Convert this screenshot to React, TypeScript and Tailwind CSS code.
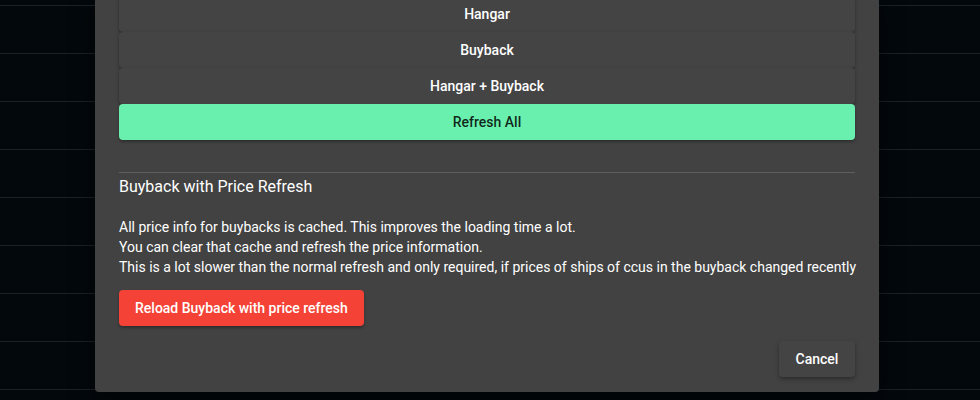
import React from 'react';

const rows = Array.from({ length: 10 });

const GreyButton: React.FC<{ label: string }> = ({ label }) => (
  <button className="h-9 w-full rounded-[4px] bg-[#444444] text-sm font-medium text-white shadow-[0_2px_2px_rgba(0,0,0,0.25),0_1px_4px_rgba(0,0,0,0.15)]">
    {label}
  </button>
);

const App: React.FC = () => {
  return (
    <div
      className="relative h-[400px] w-[980px] overflow-hidden bg-[#03080c]"
      style={{ fontFamily: 'Roboto, "Liberation Sans", sans-serif' }}
    >
      <div className="-mt-[42px] flex flex-col">
        {rows.map((_, i) => (
          <div key={i} className="h-12 border-b border-[#1b2128]" />
        ))}
      </div>

      <div className="absolute bottom-[8px] left-[95px] w-[784px] rounded-[4px] bg-[#424242] px-6 pb-[15px] shadow-[0_8px_24px_rgba(0,0,0,0.5)]">
        <div className="flex flex-col">
          <GreyButton label="Hangar" />
          <GreyButton label="Buyback" />
          <GreyButton label="Hangar + Buyback" />
          <button className="h-9 w-full rounded-[4px] bg-[#69f0ae] text-sm font-medium text-black/85 shadow-[0_2px_3px_rgba(0,0,0,0.3)]">
            Refresh All
          </button>
        </div>

        <div className="mt-8 h-px bg-white/15" />

        <h3 className="mt-[2px] text-base leading-6 text-white">Buyback with Price Refresh</h3>

        <p className="mt-[18px] whitespace-nowrap text-sm leading-5 text-white">
          All price info for buybacks is cached. This improves the loading time a lot.
          <br />
          You can clear that cache and refresh the price information.
          <br />
          This is a lot slower than the normal refresh and only required, if prices of ships of ccus in the buyback changed recently
        </p>

        <button className="mt-[13px] h-9 rounded-[4px] bg-[#f44336] px-4 text-sm font-medium text-white shadow-[0_2px_3px_rgba(0,0,0,0.3)]">
          Reload Buyback with price refresh
        </button>

        <div className="mt-[15px] flex justify-end">
          <button className="h-9 w-[76px] rounded-[4px] bg-[#444444] text-sm font-medium text-white shadow-[0_2px_4px_rgba(0,0,0,0.35)]">
            Cancel
          </button>
        </div>
      </div>
    </div>
  );
};

export default App;
